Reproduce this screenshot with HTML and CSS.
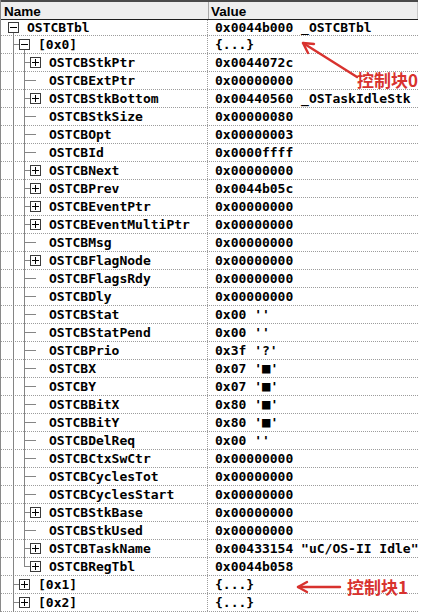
FILE: index.html
```html
<!DOCTYPE html>
<html>
<head>
<meta charset="utf-8">
<link rel="stylesheet" href="styles.css">
</head>
<body>
<div class="page">
  <div class="tbl">
    <div class="hdr">
      <div class="hname">Name</div>
      <div class="hval">Value</div>
    </div>

    <div class="row first">
      <div class="name"><span class="b open"><i class="box"></i></span><span class="t">OSTCBTbl</span></div>
      <div class="val">0x0044b000 _OSTCBTbl</div>
    </div>
    <div class="row">
      <div class="name"><span class="n"></span><span class="b open"><i class="box"></i></span><span class="t">[0x0]</span></div>
      <div class="val">{...}</div>
    </div>

    <div class="row"><div class="name"><span class="g"></span><span class="n"></span><span class="b"><i class="box plus"></i></span><span class="t">OSTCBStkPtr</span></div><div class="val">0x0044072c</div></div>
    <div class="row"><div class="name"><span class="g"></span><span class="n"></span><span class="b leaf"></span><span class="t">OSTCBExtPtr</span></div><div class="val">0x00000000</div></div>
    <div class="row"><div class="name"><span class="g"></span><span class="n"></span><span class="b"><i class="box plus"></i></span><span class="t">OSTCBStkBottom</span></div><div class="val">0x00440560 _OSTaskIdleStk</div></div>
    <div class="row"><div class="name"><span class="g"></span><span class="n"></span><span class="b leaf"></span><span class="t">OSTCBStkSize</span></div><div class="val">0x00000080</div></div>
    <div class="row"><div class="name"><span class="g"></span><span class="n"></span><span class="b leaf"></span><span class="t">OSTCBOpt</span></div><div class="val">0x00000003</div></div>
    <div class="row"><div class="name"><span class="g"></span><span class="n"></span><span class="b leaf"></span><span class="t">OSTCBId</span></div><div class="val">0x0000ffff</div></div>
    <div class="row"><div class="name"><span class="g"></span><span class="n"></span><span class="b"><i class="box plus"></i></span><span class="t">OSTCBNext</span></div><div class="val">0x00000000</div></div>
    <div class="row"><div class="name"><span class="g"></span><span class="n"></span><span class="b"><i class="box plus"></i></span><span class="t">OSTCBPrev</span></div><div class="val">0x0044b05c</div></div>
    <div class="row"><div class="name"><span class="g"></span><span class="n"></span><span class="b"><i class="box plus"></i></span><span class="t">OSTCBEventPtr</span></div><div class="val">0x00000000</div></div>
    <div class="row"><div class="name"><span class="g"></span><span class="n"></span><span class="b"><i class="box plus"></i></span><span class="t">OSTCBEventMultiPtr</span></div><div class="val">0x00000000</div></div>
    <div class="row"><div class="name"><span class="g"></span><span class="n"></span><span class="b leaf"></span><span class="t">OSTCBMsg</span></div><div class="val">0x00000000</div></div>
    <div class="row"><div class="name"><span class="g"></span><span class="n"></span><span class="b"><i class="box plus"></i></span><span class="t">OSTCBFlagNode</span></div><div class="val">0x00000000</div></div>
    <div class="row"><div class="name"><span class="g"></span><span class="n"></span><span class="b leaf"></span><span class="t">OSTCBFlagsRdy</span></div><div class="val">0x00000000</div></div>
    <div class="row"><div class="name"><span class="g"></span><span class="n"></span><span class="b leaf"></span><span class="t">OSTCBDly</span></div><div class="val">0x00000000</div></div>
    <div class="row"><div class="name"><span class="g"></span><span class="n"></span><span class="b leaf"></span><span class="t">OSTCBStat</span></div><div class="val">0x00 ''</div></div>
    <div class="row"><div class="name"><span class="g"></span><span class="n"></span><span class="b leaf"></span><span class="t">OSTCBStatPend</span></div><div class="val">0x00 ''</div></div>
    <div class="row"><div class="name"><span class="g"></span><span class="n"></span><span class="b leaf"></span><span class="t">OSTCBPrio</span></div><div class="val">0x3f '?'</div></div>
    <div class="row"><div class="name"><span class="g"></span><span class="n"></span><span class="b leaf"></span><span class="t">OSTCBX</span></div><div class="val">0x07 '<span class="blk">■</span>'</div></div>
    <div class="row"><div class="name"><span class="g"></span><span class="n"></span><span class="b leaf"></span><span class="t">OSTCBY</span></div><div class="val">0x07 '<span class="blk">■</span>'</div></div>
    <div class="row"><div class="name"><span class="g"></span><span class="n"></span><span class="b leaf"></span><span class="t">OSTCBBitX</span></div><div class="val">0x80 '<span class="blk">■</span>'</div></div>
    <div class="row"><div class="name"><span class="g"></span><span class="n"></span><span class="b leaf"></span><span class="t">OSTCBBitY</span></div><div class="val">0x80 '<span class="blk">■</span>'</div></div>
    <div class="row"><div class="name"><span class="g"></span><span class="n"></span><span class="b leaf"></span><span class="t">OSTCBDelReq</span></div><div class="val">0x00 ''</div></div>
    <div class="row"><div class="name"><span class="g"></span><span class="n"></span><span class="b leaf"></span><span class="t">OSTCBCtxSwCtr</span></div><div class="val">0x00000000</div></div>
    <div class="row"><div class="name"><span class="g"></span><span class="n"></span><span class="b leaf"></span><span class="t">OSTCBCyclesTot</span></div><div class="val">0x00000000</div></div>
    <div class="row"><div class="name"><span class="g"></span><span class="n"></span><span class="b leaf"></span><span class="t">OSTCBCyclesStart</span></div><div class="val">0x00000000</div></div>
    <div class="row"><div class="name"><span class="g"></span><span class="n"></span><span class="b"><i class="box plus"></i></span><span class="t">OSTCBStkBase</span></div><div class="val">0x00000000</div></div>
    <div class="row"><div class="name"><span class="g"></span><span class="n"></span><span class="b leaf"></span><span class="t">OSTCBStkUsed</span></div><div class="val">0x00000000</div></div>
    <div class="row"><div class="name"><span class="g"></span><span class="n"></span><span class="b"><i class="box plus"></i></span><span class="t">OSTCBTaskName</span></div><div class="val">0x00433154 "uC/OS-II Idle"</div></div>
    <div class="row"><div class="name"><span class="g"></span><span class="n last"></span><span class="b"><i class="box plus"></i></span><span class="t">OSTCBRegTbl</span></div><div class="val">0x0044b058</div></div>

    <div class="row"><div class="name"><span class="n"></span><span class="b"><i class="box plus"></i></span><span class="t">[0x1]</span></div><div class="val">{...}</div></div>
    <div class="row"><div class="name"><span class="n"></span><span class="b"><i class="box plus"></i></span><span class="t">[0x2]</span></div><div class="val">{...}</div></div>
  </div>

  <svg class="marks" width="426" height="613" viewBox="0 0 426 613">
    <g fill="none" stroke="#d8322e" stroke-width="2.4" stroke-linecap="round" stroke-linejoin="round">
      <path d="M357 77 L303 43"/>
      <path d="M308 53 L303 43 L314 44"/>
      <path d="M340 587 L298 587"/>
      <path d="M307 582 L298 587 L307 592"/>
    </g>
  </svg>
  <div class="note note0">控制块0</div>
  <div class="note note1">控制块1</div>
</div>
</body>
</html>
```

FILE: styles.css
```css
html, body {
  margin: 0;
  padding: 0;
  background: #ffffff;
}

.page {
  position: relative;
  width: 426px;
  height: 613px;
  overflow: hidden;
  background: #ffffff;
}

.tbl {
  width: 418px;
  box-sizing: border-box;
  border-left: 1px solid #8a8a8a;
  font-family: "DejaVu Sans Mono", "Liberation Mono", monospace;
  font-weight: bold;
  font-size: 13px;
  color: #000;
}

.hdr {
  display: flex;
  height: 20px;
  box-sizing: border-box;
  border-top: 2px solid #4a4a4a;
  border-bottom: 1px solid #1e1e1e;
  background: #eeeeee;
  font-family: "Liberation Sans", Arial, sans-serif;
  font-weight: bold;
  font-size: 13.5px;
  line-height: 17px;
}

.hname {
  width: 208px;
  flex: none;
  box-sizing: border-box;
  padding-left: 3px;
  padding-top: 1px;
  border-right: 1px solid #a8a8a8;
}

.hval {
  flex: 1;
  padding-left: 2px;
  padding-top: 1px;
  border-right: 1px solid #c8c8c8;
}

.row {
  display: flex;
  height: 18px;
  box-sizing: border-box;
  border-bottom: 1px dotted #9c9c9c;
  line-height: 17px;
}

.row.first {
  height: 16px;
  line-height: 15px;
}

.name {
  width: 207px;
  flex: none;
  box-sizing: border-box;
  padding-left: 7px;
  display: flex;
  border-right: 1px dotted #9c9c9c;
}

.val {
  flex: 1;
  padding-left: 7px;
  white-space: pre;
  overflow: hidden;
}

.t {
  margin-left: 8px;
  white-space: pre;
}

.g, .n, .b {
  width: 11px;
  flex: none;
  position: relative;
}

.g::before, .n::before {
  content: "";
  position: absolute;
  left: 5px;
  top: 0;
  bottom: -1px;
  width: 1px;
  background: #858585;
}

.n.last::before {
  bottom: auto;
  height: 9px;
}

.n::after {
  content: "";
  position: absolute;
  left: 5px;
  right: 0;
  top: 8px;
  height: 1px;
  background: #858585;
}

.b {
  display: flex;
  align-items: center;
}

.b.leaf::before {
  content: "";
  position: absolute;
  left: 0;
  width: 6px;
  top: 8px;
  height: 1px;
  background: #858585;
}

.b.open::after {
  content: "";
  position: absolute;
  left: 5px;
  width: 1px;
  top: calc(50% + 5.5px);
  bottom: -1px;
  background: #858585;
}

.box {
  display: block;
  position: relative;
  width: 11px;
  height: 11px;
  box-sizing: border-box;
  border: 1px solid #3a3a3a;
  background: #ffffff;
}

.box::before {
  content: "";
  position: absolute;
  left: 1px;
  right: 1px;
  top: 4px;
  height: 1px;
  background: #000;
}

.box.plus::after {
  content: "";
  position: absolute;
  top: 1px;
  bottom: 1px;
  left: 4px;
  width: 1px;
  background: #000;
}

.blk {
  font-size: 14px;
}

.marks {
  position: absolute;
  left: 0;
  top: 0;
  pointer-events: none;
}

.note {
  position: absolute;
  font-family: "Noto Sans CJK SC", "Noto Sans", sans-serif;
  font-size: 17px;
  font-weight: bold;
  line-height: 16px;
  color: #d8322e;
  white-space: nowrap;
}

.note0 {
  left: 357px;
  top: 72px;
}

.note1 {
  left: 347px;
  top: 579px;
}
```
